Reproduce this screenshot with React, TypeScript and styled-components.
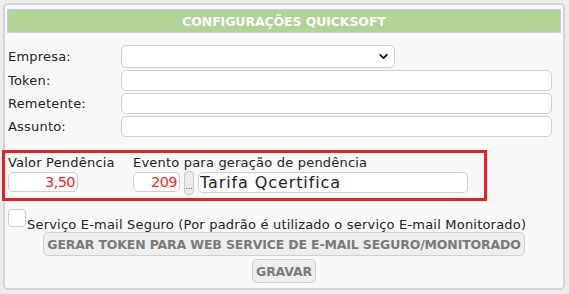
import React from "react";
import styled, { createGlobalStyle } from "styled-components";
import { ChevronDown } from "lucide-react";

const GlobalStyle = createGlobalStyle`
  html, body {
    margin: 0;
    padding: 0;
    background: #ececec;
  }
  body {
    font-family: "DejaVu Sans", "Noto Sans", sans-serif;
    font-size: 13px;
    letter-spacing: 0.2px;
    color: #222;
  }
`;

const Panel = styled.div`
  box-sizing: border-box;
  margin: 3px 0 0 3px;
  width: 562px;
  height: 287px;
  background: #f8f8f8;
  border: 2px solid #d4d4d4;
  border-radius: 5px;
`;

const Header = styled.div`
  box-sizing: border-box;
  margin: 4px 2px 0 2px;
  height: 24px;
  background: #b0d494;
  border: 1px solid #c9c9f4;
  display: flex;
  align-items: center;
  justify-content: center;
  color: #fff;
  font-weight: bold;
  font-size: 12.5px;
  letter-spacing: -0.1px;
`;

const Form = styled.div`
  margin-top: 12px;
  padding-left: 3px;
  display: grid;
  grid-template-columns: 113px 431px;
  row-gap: 2px;
  align-items: center;
`;

const Label = styled.label`
  line-height: 15px;
`;

const TextInput = styled.input<{ $w?: number; $h?: number }>`
  box-sizing: border-box;
  width: ${(p) => (p.$w ? `${p.$w}px` : "100%")};
  height: ${(p) => p.$h ?? 21}px;
  margin: 0;
  border: 1px solid #cfcfcf;
  border-radius: 5px;
  background: #fff;
  font-family: inherit;
  outline: none;
`;

const SelectWrap = styled.div`
  position: relative;
  width: 274px;
  height: 23px;
`;

const Select = styled.select`
  box-sizing: border-box;
  width: 100%;
  height: 100%;
  margin: 0;
  border: 1px solid #cfcfcf;
  border-radius: 5px;
  background: #fff;
  appearance: none;
  font-family: inherit;
`;

const Chevron = styled(ChevronDown)`
  position: absolute;
  right: 5px;
  top: 5px;
  pointer-events: none;
`;

const Highlight = styled.div`
  box-sizing: border-box;
  margin-top: 16px;
  width: 479px;
  height: 45px;
  outline: 3px solid #e8202a;
  padding: 2px 0 0 3px;
  display: flex;
`;

const Group = styled.div<{ $w: number }>`
  width: ${(p) => p.$w}px;
  display: flex;
  flex-direction: column;
`;

const GroupLabel = styled.div`
  height: 15px;
  line-height: 15px;
  margin-bottom: 2px;
`;

const InputLine = styled.div`
  display: flex;
  align-items: flex-start;
  gap: 3px;
`;

const ValueInput = styled(TextInput)`
  height: 20px;
  color: #ff1f1f;
  text-align: right;
  font-size: 14.5px;
  letter-spacing: -0.6px;
  padding: 0 2px;
`;

const DescInput = styled(TextInput)`
  height: 21px;
  color: #222;
  font-size: 16px;
  letter-spacing: 0.9px;
  padding: 0 1px;
`;

const DotsButton = styled.button`
  box-sizing: border-box;
  width: 10px;
  height: 24px;
  margin: -1px 1px 0 1px;
  padding: 0 0 3px 0;
  border: 1px solid #cccccc;
  border-radius: 4px;
  background: #ececec;
  font-size: 9px;
  letter-spacing: 0;
  line-height: 1;
  display: flex;
  align-items: flex-end;
  justify-content: center;
  color: #444;
`;

const CheckRow = styled.label`
  margin-top: 11px;
  padding-left: 3px;
  display: flex;
  align-items: flex-end;
  height: 23px;
`;

const Box = styled.input`
  box-sizing: border-box;
  appearance: none;
  margin: 0 1px 5px 0;
  width: 18px;
  height: 18px;
  border: 1px solid #cfcfcf;
  border-radius: 4px;
  background: #fff;
`;

const CheckText = styled.span`
  line-height: 15px;
`;

const Actions = styled.div`
  display: flex;
  flex-direction: column;
  align-items: center;
  gap: 3px;
`;

const ActionButton = styled.button`
  box-sizing: border-box;
  height: 24px;
  padding: 0 3px;
  border: 1px solid #cfcfcf;
  border-radius: 5px;
  background: #eeeeee;
  color: #7a7a7a;
  font-family: inherit;
  font-weight: bold;
  font-size: 12.5px;
  letter-spacing: -0.15px;
`;

export default function App() {
  return (
    <>
      <GlobalStyle />
      <Panel>
        <Header>CONFIGURAÇÕES QUICKSOFT</Header>
        <Form>
          <Label>Empresa:</Label>
          <SelectWrap>
            <Select />
            <Chevron size={13} strokeWidth={3.5} color="#111" />
          </SelectWrap>
          <Label>Token:</Label>
          <TextInput />
          <Label>Remetente:</Label>
          <TextInput />
          <Label>Assunto:</Label>
          <TextInput />
        </Form>
        <Highlight>
          <Group $w={125}>
            <GroupLabel>Valor Pendência</GroupLabel>
            <InputLine>
              <ValueInput $w={70} defaultValue="3,50" />
            </InputLine>
          </Group>
          <Group $w={340}>
            <GroupLabel>Evento para geração de pendência</GroupLabel>
            <InputLine>
              <ValueInput $w={47} defaultValue="209" />
              <DotsButton>...</DotsButton>
              <DescInput $w={270} defaultValue="Tarifa Qcertifica" />
            </InputLine>
          </Group>
        </Highlight>
        <CheckRow>
          <Box type="checkbox" />
          <CheckText>
            Serviço E-mail Seguro (Por padrão é utilizado o serviço E-mail Monitorado)
          </CheckText>
        </CheckRow>
        <Actions>
          <ActionButton>GERAR TOKEN PARA WEB SERVICE DE E-MAIL SEGURO/MONITORADO</ActionButton>
          <ActionButton>GRAVAR</ActionButton>
        </Actions>
      </Panel>
    </>
  );
}
